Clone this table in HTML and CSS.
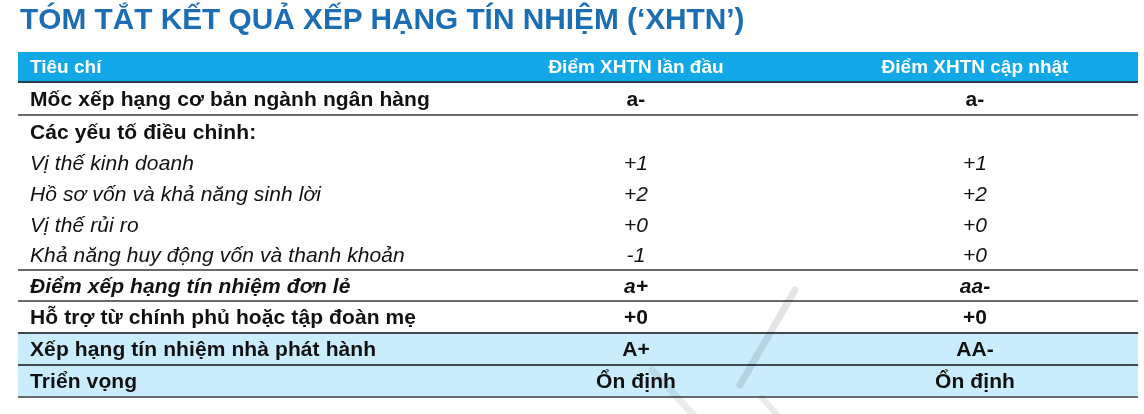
FILE: index.html
```html
<!DOCTYPE html>
<html lang="vi">
<head>
<meta charset="utf-8">
<title>Tóm tắt kết quả XHTN</title>
<link rel="stylesheet" href="styles.css">
</head>
<body>
<div class="page">
  <h1 class="title">TÓM TẮT KẾT QUẢ XẾP HẠNG TÍN NHIỆM (‘XHTN’)</h1>
  <div class="table">
    <div class="row head">
      <div class="c1">Tiêu chí</div>
      <div class="c2">Điểm XHTN lần đầu</div>
      <div class="c3">Điểm XHTN cập nhật</div>
    </div>
    <div class="row tall line bold">
      <div class="c1">Mốc xếp hạng cơ bản ngành ngân hàng</div>
      <div class="c2">a-</div>
      <div class="c3">a-</div>
    </div>
    <div class="row bold">
      <div class="c1">Các yếu tố điều chỉnh:</div>
      <div class="c2"></div>
      <div class="c3"></div>
    </div>
    <div class="row ital">
      <div class="c1">Vị thế kinh doanh</div>
      <div class="c2">+1</div>
      <div class="c3">+1</div>
    </div>
    <div class="row ital">
      <div class="c1">Hồ sơ vốn và khả năng sinh lời</div>
      <div class="c2">+2</div>
      <div class="c3">+2</div>
    </div>
    <div class="row ital">
      <div class="c1">Vị thế rủi ro</div>
      <div class="c2">+0</div>
      <div class="c3">+0</div>
    </div>
    <div class="row ital line">
      <div class="c1">Khả năng huy động vốn và thanh khoản</div>
      <div class="c2">-1</div>
      <div class="c3">+0</div>
    </div>
    <div class="row bold ital line">
      <div class="c1">Điểm xếp hạng tín nhiệm đơn lẻ</div>
      <div class="c2">a+</div>
      <div class="c3">aa-</div>
    </div>
    <div class="row bold line dark">
      <div class="c1">Hỗ trợ từ chính phủ hoặc tập đoàn mẹ</div>
      <div class="c2">+0</div>
      <div class="c3">+0</div>
    </div>
    <div class="row bold line dark blue">
      <div class="c1">Xếp hạng tín nhiệm nhà phát hành</div>
      <div class="c2">A+</div>
      <div class="c3">AA-</div>
    </div>
    <div class="row bold line blue">
      <div class="c1">Triển vọng</div>
      <div class="c2">Ổn định</div>
      <div class="c3">Ổn định</div>
    </div>
  </div>
  <svg class="watermark" width="260" height="140" viewBox="0 0 260 140" aria-hidden="true">
    <path d="M155 10 L100 105" stroke="#e4e4e4" stroke-width="7" fill="none" stroke-linecap="round"/>
    <path d="M12 90 L58 140" stroke="#ebebeb" stroke-width="7" fill="none" stroke-linecap="round"/>
    <path d="M122 118 L142 140" stroke="#ebebeb" stroke-width="6" fill="none" stroke-linecap="round"/>
  </svg>
</div>
</body>
</html>
```

FILE: styles.css
```css
html, body {
  margin: 0;
  padding: 0;
  background: #ffffff;
}

.page {
  position: relative;
  width: 1144px;
  height: 414px;
  padding: 0 6px 0 18px;
  box-sizing: border-box;
  font-family: "Liberation Sans", Arial, sans-serif;
  color: #111111;
  overflow: hidden;
}

.title {
  margin: 0;
  padding: 2px 0 0 2px;
  height: 52px;
  box-sizing: border-box;
  font-size: 29.8px;
  line-height: 34px;
  font-weight: bold;
  color: #1b6db4;
}

.table {
  position: relative;
  z-index: 1;
  width: 1120px;
}

.row {
  display: grid;
  grid-template-columns: 442px 352px 1fr;
  align-items: center;
  height: 31px;
  box-sizing: border-box;
  font-size: 21px;
  letter-spacing: 0.1px;
}

.row > div {
  white-space: nowrap;
}

.c1 {
  padding-left: 12px;
}

.c2, .c3 {
  text-align: center;
}

.head {
  background: #12a8e7;
  color: #ffffff;
  font-size: 19px;
  letter-spacing: 0;
  font-weight: bold;
  border-bottom: 2px solid #25404f;
  padding-top: 1px;
}

.tall {
  height: 33px;
}

.line {
  border-bottom: 2px solid #6a6a6a;
}

.line.dark {
  border-bottom-color: #3e4a52;
  height: 32px;
}

.line.blue {
  height: 32px;
}

.bold {
  font-weight: bold;
}

.ital {
  font-style: italic;
}

.blue {
  background: #c9edfc;
}

.watermark {
  position: absolute;
  left: 640px;
  top: 280px;
  z-index: 2;
  mix-blend-mode: multiply;
}
```
